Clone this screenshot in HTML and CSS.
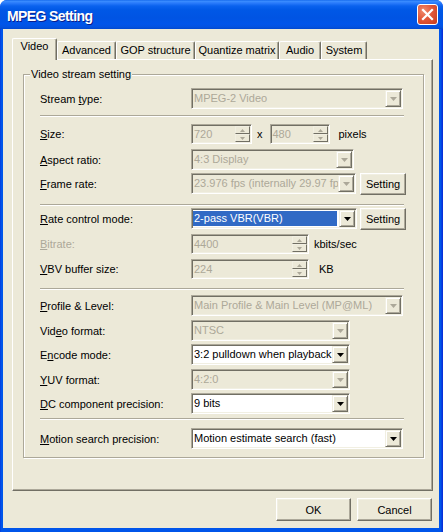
FILE: index.html
```html
<!DOCTYPE html>
<html>
<head>
<meta charset="utf-8">
<title>MPEG Setting</title>
<link rel="stylesheet" href="styles.css">
</head>
<body>
<div class="window">
  <div class="titlebar">
    <span class="title">MPEG Setting</span>
    <span class="close"><svg width="19" height="19" viewBox="0 0 19 19"><path d="M5 5L14 14M14 5L5 14" stroke="#fff" stroke-width="2.2" stroke-linecap="square"/></svg></span>
  </div>
  <div class="client">
    <div class="tabs">
      <div class="tab active t-video">Video</div>
      <div class="tab t-adv">Advanced</div>
      <div class="tab t-gop">GOP structure</div>
      <div class="tab t-quant">Quantize matrix</div>
      <div class="tab t-audio">Audio</div>
      <div class="tab t-sys">System</div>
    </div>
    <div class="panel">
      <div class="group">
        <div class="group-caption">Video stream setting</div>

        <div class="row mt7">
          <span class="lbl">Stream <u>t</u>ype:</span>
          <div class="combo off w-wide"><span class="val">MPEG-2 Video</span><span class="drop"><svg width="7" height="4" viewBox="0 0 7 4"><path d="M0 0h7L3.5 4z"/></svg></span></div>
        </div>

        <div class="sep mt6"></div>

        <div class="row spinrow mt7">
          <span class="lbl"><u>S</u>ize:</span>
          <div class="spin off w-size1"><span class="val">720</span><span class="spinbtns"><span class="sb"><svg width="5" height="3" viewBox="0 0 5 3"><path d="M2.5 0L5 3H0z"/></svg></span><span class="sb"><svg width="5" height="3" viewBox="0 0 5 3"><path d="M0 0h5L2.5 3z"/></svg></span></span></div>
          <span class="unit times">x</span>
          <div class="spin off w-size2"><span class="val">480</span><span class="spinbtns"><span class="sb"><svg width="5" height="3" viewBox="0 0 5 3"><path d="M2.5 0L5 3H0z"/></svg></span><span class="sb"><svg width="5" height="3" viewBox="0 0 5 3"><path d="M0 0h5L2.5 3z"/></svg></span></span></div>
          <span class="unit pixels">pixels</span>
        </div>

        <div class="row mt5">
          <span class="lbl"><u>A</u>spect ratio:</span>
          <div class="combo off w-aspect"><span class="val">4:3 Display</span><span class="drop"><svg width="7" height="4" viewBox="0 0 7 4"><path d="M0 0h7L3.5 4z"/></svg></span></div>
        </div>

        <div class="row btnrow mt3">
          <span class="lbl"><u>F</u>rame rate:</span>
          <div class="combo off w-frame"><span class="val">23.976 fps (internally 29.97 fps)</span><span class="drop"><svg width="7" height="4" viewBox="0 0 7 4"><path d="M0 0h7L3.5 4z"/></svg></span></div>
          <div class="btn setting">Setting</div>
        </div>

        <div class="sep mt9"></div>

        <div class="row btnrow mt2">
          <span class="lbl"><u>R</u>ate control mode:</span>
          <div class="combo w-rate"><span class="val sel">2-pass VBR(VBR)</span><span class="drop"><svg width="7" height="4" viewBox="0 0 7 4"><path d="M0 0h7L3.5 4z"/></svg></span></div>
          <div class="btn setting">Setting</div>
        </div>

        <div class="row spinrow mt4">
          <span class="lbl dis"><u>B</u>itrate:</span>
          <div class="spin off w-bit"><span class="val">4400</span><span class="spinbtns"><span class="sb"><svg width="5" height="3" viewBox="0 0 5 3"><path d="M2.5 0L5 3H0z"/></svg></span><span class="sb"><svg width="5" height="3" viewBox="0 0 5 3"><path d="M0 0h5L2.5 3z"/></svg></span></span></div>
          <span class="unit kbits">kbits/sec</span>
        </div>

        <div class="row spinrow mt5">
          <span class="lbl"><u>V</u>BV buffer size:</span>
          <div class="spin off w-bit"><span class="val">224</span><span class="spinbtns"><span class="sb"><svg width="5" height="3" viewBox="0 0 5 3"><path d="M2.5 0L5 3H0z"/></svg></span><span class="sb"><svg width="5" height="3" viewBox="0 0 5 3"><path d="M0 0h5L2.5 3z"/></svg></span></span></div>
          <span class="unit kb">KB</span>
        </div>

        <div class="sep mt9"></div>

        <div class="row mt5">
          <span class="lbl"><u>P</u>rofile &amp; Level:</span>
          <div class="combo off w-wide"><span class="val">Main Profile &amp; Main Level (MP@ML)</span><span class="drop"><svg width="7" height="4" viewBox="0 0 7 4"><path d="M0 0h7L3.5 4z"/></svg></span></div>
        </div>

        <div class="row mt4">
          <span class="lbl">Vid<u>e</u>o format:</span>
          <div class="combo off w-mid"><span class="val">NTSC</span><span class="drop"><svg width="7" height="4" viewBox="0 0 7 4"><path d="M0 0h7L3.5 4z"/></svg></span></div>
        </div>

        <div class="row mt3">
          <span class="lbl">E<u>n</u>code mode:</span>
          <div class="combo w-mid"><span class="val">3:2 pulldown when playback</span><span class="drop"><svg width="7" height="4" viewBox="0 0 7 4"><path d="M0 0h7L3.5 4z"/></svg></span></div>
        </div>

        <div class="row mt4">
          <span class="lbl"><u>Y</u>UV format:</span>
          <div class="combo off w-mid"><span class="val">4:2:0</span><span class="drop"><svg width="7" height="4" viewBox="0 0 7 4"><path d="M0 0h7L3.5 4z"/></svg></span></div>
        </div>

        <div class="row mt3">
          <span class="lbl"><u>D</u>C component precision:</span>
          <div class="combo w-mid"><span class="val">9 bits</span><span class="drop"><svg width="7" height="4" viewBox="0 0 7 4"><path d="M0 0h7L3.5 4z"/></svg></span></div>
        </div>

        <div class="sep mt4"></div>

        <div class="row mt8">
          <span class="lbl"><u>M</u>otion search precision:</span>
          <div class="combo w-wide"><span class="val">Motion estimate search (fast)</span><span class="drop"><svg width="7" height="4" viewBox="0 0 7 4"><path d="M0 0h7L3.5 4z"/></svg></span></div>
        </div>
      </div>
    </div>
    <div class="footer">
      <div class="btn dlg">OK</div>
      <div class="btn dlg">Cancel</div>
    </div>
  </div>
</div>
</body>
</html>
```

FILE: styles.css
```css
* { box-sizing: border-box; }
html, body { margin: 0; padding: 0; }
body {
  width: 443px;
  height: 532px;
  overflow: hidden;
  background: #ffffff;
  font-family: "Liberation Sans", Arial, sans-serif;
  font-size: 11px;
  color: #000;
}
u { text-decoration: underline; text-underline-offset: 1px; }

.window {
  width: 443px;
  height: 532px;
  display: flex;
  flex-direction: column;
  background: linear-gradient(to right, #0831D9 0, #0055EA 1px, #0055EA 441px, #0831D9 442px);
  border-radius: 7px 7px 0 0;
  overflow: hidden;
}

.titlebar {
  height: 29px;
  flex: none;
  display: flex;
  align-items: center;
  padding: 0 5px 0 7px;
  background: linear-gradient(to bottom,
    #0A5FE8 0, #3D8FFF 1px, #2A7BFB 3px, #0A62EE 6px, #0058E6 10px,
    #0054E3 18px, #0055EA 24px, #0352E0 27px, #0048D0 29px);
}
.title {
  flex: 1;
  color: #fff;
  font-weight: bold;
  font-size: 14px;
  letter-spacing: -0.6px;
  text-shadow: 1px 1px #0A1E8C;
  padding-top: 2px;
}
.close {
  width: 21px;
  height: 21px;
  border: 1px solid #fff;
  border-radius: 3px;
  background: radial-gradient(circle at 30% 30%, #F08B6E 0, #E2583A 45%, #C53B1E 100%);
  display: flex;
  align-items: center;
  justify-content: center;
}

.client {
  flex: 1;
  margin: 0 4px 4px 3px;
  background: #ECE9D8;
  padding: 9px 6px 0 9px;
  display: flex;
  flex-direction: column;
}

.tabs {
  display: flex;
  align-items: flex-end;
  height: 22px;
  margin-bottom: -1px;
  position: relative;
  z-index: 1;
}
.tab {
  height: 18px;
  margin-bottom: 1px;
  border: 1px solid #fff;
  border-right-color: #716F64;
  border-bottom: none;
  border-radius: 2px 2px 0 0;
  box-shadow: inset -1px 0 #ACA899;
  background: #ECE9D8;
  text-align: center;
  line-height: 13px;
  padding-top: 2px;
  white-space: nowrap;
}
.tab.active {
  height: 22px;
  margin-bottom: 0;
  padding-top: 1px;
}
.t-video { width: 45px; }
.t-adv { width: 59px; }
.t-gop { width: 79px; }
.t-quant { width: 84px; }
.t-audio { width: 42px; }
.t-sys { width: 46px; }

.panel {
  height: 432px;
  flex: none;
  border: 1px solid #fff;
  border-right-color: #716F64;
  border-bottom-color: #716F64;
  box-shadow: inset -1px -1px #ACA899;
  padding: 14px 0 0 10px;
}

.group {
  width: 401px;
  height: 384px;
  border: 1px solid #ACA899;
  box-shadow: inset 1px 1px #fff, 1px 1px #fff;
  padding: 0 16px 8px 16px;
  display: flex;
  flex-direction: column;
}
.group-caption {
  width: fit-content;
  margin: -7px 0 0 -10px;
  padding: 0 1px;
  background: #ECE9D8;
  line-height: 13px;
  height: 13px;
}

.row {
  display: flex;
  align-items: flex-start;
  height: 21px;
  flex: none;
}
.row.spinrow { height: 20px; }
.row.btnrow { height: 22px; }
.lbl {
  width: 151px;
  flex: none;
  align-self: center;
  white-space: nowrap;
}
.lbl.dis { color: #ACA899; }

.mt2 { margin-top: 2px; }
.mt3 { margin-top: 3px; }
.mt4 { margin-top: 4px; }
.mt5 { margin-top: 5px; }
.mt6 { margin-top: 6px; }
.mt7 { margin-top: 7px; }
.mt8 { margin-top: 8px; }
.mt9 { margin-top: 9px; }

.sep {
  width: 364px;
  height: 2px;
  flex: none;
  border-top: 1px solid #ACA899;
  border-bottom: 1px solid #fff;
}

.combo, .spin {
  height: 21px;
  flex: none;
  display: flex;
  border: 1px solid;
  border-color: #ACA899 #fff #fff #ACA899;
  box-shadow: inset 1px 1px #716F64, inset -1px -1px #F1EFE2;
  padding: 1px;
  background: #fff;
  overflow: hidden;
}
.spin { height: 20px; }
.combo.off, .spin.off { background: #ECE9D8; color: #ACA899; }
.val {
  flex: 1;
  min-width: 0;
  line-height: 17px;
  padding-left: 1px;
  white-space: nowrap;
  overflow: hidden;
}
.spin .val { line-height: 16px; }
.val.sel {
  background: #316AC5;
  color: #fff;
  margin: 1px 2px 1px 0;
  line-height: 15px;
}
.drop {
  width: 16px;
  height: 17px;
  flex: none;
  border: 1px solid;
  border-color: #F1EFE2 #716F64 #716F64 #F1EFE2;
  box-shadow: inset 1px 1px #fff, inset -1px -1px #ACA899;
  background: #ECE9D8;
  display: flex;
  align-items: center;
  justify-content: center;
  fill: #000;
}
.off .drop { fill: #ACA899; }

.spinbtns {
  width: 15px;
  flex: none;
  display: flex;
  flex-direction: column;
}
.sb {
  height: 8px;
  border: 1px solid;
  border-color: #F1EFE2 #716F64 #716F64 #F1EFE2;
  background: #ECE9D8;
  display: flex;
  align-items: center;
  justify-content: center;
  fill: #ACA899;
}

.w-wide { width: 212px; }
.w-aspect { width: 163px; }
.w-frame { width: 165px; }
.w-rate { width: 166px; }
.w-mid { width: 159px; }
.w-size1 { width: 61px; }
.w-size2 { width: 60px; }
.w-bit { width: 118px; }

.unit { align-self: center; white-space: nowrap; }
.times { margin: 0 7px 0 5px; }
.pixels { margin-left: 9px; }
.kbits { margin-left: 5px; }
.kb { margin-left: 10px; }

.btn {
  flex: none;
  display: flex;
  align-items: center;
  justify-content: center;
  border: 1px solid;
  border-color: #fff #716F64 #716F64 #fff;
  box-shadow: inset -1px -1px #ACA899, inset 1px 1px #F1EFE2;
  background: #ECE9D8;
  white-space: nowrap;
}
.btn.setting { width: 46px; height: 22px; margin-left: 4px; }
.row .w-rate + .btn.setting { margin-left: 3px; }

.footer {
  display: flex;
  justify-content: flex-end;
  gap: 6px;
  padding-right: 1px;
  margin-top: 7px;
}
.btn.dlg { width: 75px; height: 23px; }
```
